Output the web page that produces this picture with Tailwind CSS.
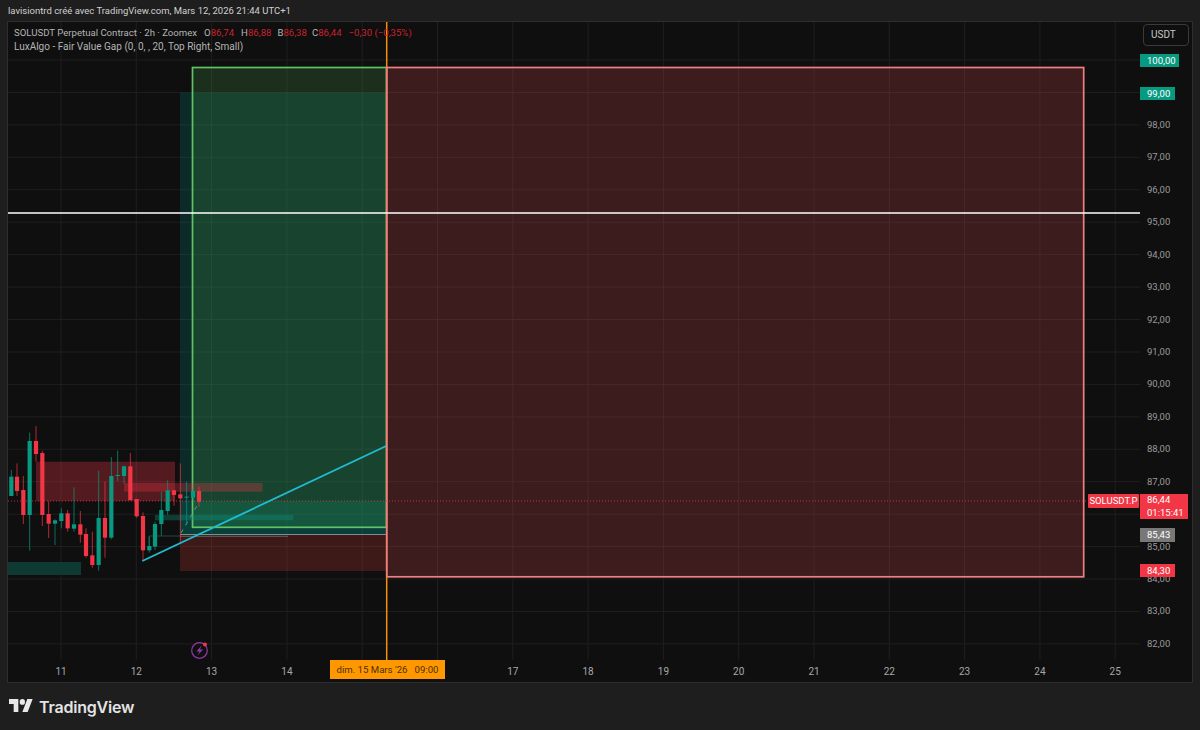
<!DOCTYPE html>
<html lang="fr">
<head>
  <meta charset="UTF-8">
  <script src="https://cdn.jsdelivr.net/npm/@tailwindcss/browser@4"></script>
  <title>SOLUSDT Perpetual Contract</title>
</head>
<body class="bg-[#1e1e1e]">
  <div class="w-[1200px] h-[730px] flex flex-col bg-[#1e1e1e] overflow-hidden font-['Roboto',sans-serif]">

    <!-- Header -->
    <div class="h-[21px] shrink-0 pl-2 pt-[4px] text-[9.5px] leading-[14px] text-[#d0d0d0]">lavisiontrd créé avec TradingView.com, Mars 12, 2026 21:44 UTC+1</div>

    <!-- Chart frame -->
    <div class="ml-[7px] w-[1186px] h-[662px] shrink-0 border border-[#2e2e2e] bg-[#0f0f0f] flex flex-col">
      <div class="flex h-[638px]">

        <!-- Pane -->
        <div class="relative w-[1132px] h-[638px]">
          <svg id="pane" class="absolute inset-0" width="1132" height="638" viewBox="8 22 1132 638" xmlns="http://www.w3.org/2000/svg">
            <g id="grid" stroke="#1f1f1f" stroke-width="1"></g>

            <!-- zones -->
            <rect x="8" y="562" width="73" height="13" fill="#0f3a33"/>
            <rect x="36" y="461.7" width="139" height="39.3" fill="#f23645" fill-opacity=".3"/>
            <rect x="180" y="92.5" width="206.500" height="442" fill="#009688" fill-opacity=".2"/>
            <rect x="180" y="501" width="206.500" height="33.5" fill="#009688" fill-opacity=".2"/>
            <rect x="180" y="535" width="206.500" height="36" fill="#f44336" fill-opacity=".2"/>
            <rect x="192.5" y="67.5" width="194" height="459.8" fill="#4caf50" fill-opacity=".2" stroke="#5fc465" stroke-width="1.7"/>
            <rect x="124" y="483" width="138.5" height="8.7" fill="#f23645" fill-opacity=".3"/>
            <rect x="155" y="515" width="138.3" height="5.3" fill="#089981" fill-opacity=".35"/>

            <!-- orange vertical cursor -->
            <line x1="386.7" y1="22" x2="386.7" y2="660" stroke="#f79000" stroke-width="1.5"/>

            <rect x="386.7" y="67.5" width="697" height="509.3" fill="#f4505a" fill-opacity=".2" stroke="#f07f85" stroke-width="1.7"/>

            <polyline points="149,547 149,536 288,536" fill="none" stroke="#1d4a40" stroke-width="1"/>
            <line x1="180" y1="534.5" x2="386" y2="534.5" stroke="#8a8a8a" stroke-width="1"/>
            <line x1="180" y1="536.5" x2="288" y2="536.5" stroke="#555" stroke-width="1"/>
            <line x1="181" y1="533" x2="201" y2="499" stroke="#7c8a88" stroke-width="1" stroke-dasharray="4 5"/>

            <g id="candles"></g>

            <line x1="8" y1="501" x2="1088" y2="501" stroke="#f23645" stroke-opacity=".75" stroke-width="1" stroke-dasharray="1 2"/>
            <line x1="142.3" y1="561" x2="386.2" y2="446" stroke="#1fbcd2" stroke-width="1.8"/>
            <line x1="8" y1="213" x2="1140" y2="213" stroke="#ffffff" stroke-width="1.5"/>

            <!-- bolt badge -->
            <circle cx="199.5" cy="650.5" r="7.8" fill="none" stroke="#8e3aa8" stroke-width="1.2"/>
            <path d="M201.500 645.5 L196.5 651.5 L199.5 651.5 L197.5 655.5 L203 649.5 L200 649.5 Z" fill="#8e3aa8"/>
            <circle cx="205" cy="644.5" r="2" fill="#f23645"/>
          </svg>

          <!-- Legend -->
          <div class="absolute left-[6px] top-[4px] text-[10px] leading-[13px] text-[#b4b4b4] whitespace-nowrap">
            <div class="flex text-[9.6px]">
              <span>SOLUSDT Perpetual Contract · 2h · Zoomex</span>
              <span class="ml-[7px]">O<span class="text-[#c9232e]">86,74</span></span>
              <span class="ml-[7px]">H<span class="text-[#c9232e]">86,88</span></span>
              <span class="ml-[6px]">B<span class="text-[#c9232e]">86,38</span></span>
              <span class="ml-[5px]">C<span class="text-[#c9232e]">86,44</span></span>
              <span class="ml-[7px] text-[#c9232e]">−0,30 (−0,35%)</span>
            </div>
            <div class="mt-[1px]">LuxAlgo - Fair Value Gap (0, 0, , 20, Top Right, Small)</div>
          </div>

          <div class="absolute left-[1080px] top-[472px] h-[13.5px] w-[51px] bg-[#f23645] rounded-[1px] text-[9.5px] leading-[13.5px] text-center text-white whitespace-nowrap">SOLUSDT.P</div>
        </div>

        <!-- Price axis -->
        <div id="axis" class="relative w-[52px] h-[638px] text-[9.5px] text-[#9a9a9a]">
          <div class="absolute left-[3px] top-[2px] w-[46px] h-[22px] border border-[#3a3a3a] rounded-[4px] pl-[7px] text-[10px] leading-[20px] text-[#c8c8c8]">USDT</div>
          <div class="absolute left-0 top-[32px] w-[39px] h-[13px] bg-[#089981] text-white leading-[13px] pl-[7px]">100,00</div>
          <div class="absolute left-0 top-[64.5px] w-[35px] h-[13px] bg-[#089981] text-white leading-[13px] pl-[7px]">99,00</div>
          <div class="absolute left-0 top-[472px] w-[48px] h-[25px] bg-[#f23645] text-white leading-[12.5px] pl-[7px]">86,44<br>01:15:41</div>
          <div class="absolute left-0 top-[506px] w-[35px] h-[13.5px] bg-[#787878] text-white leading-[13.5px] pl-[7px]">85,43</div>
          <div class="absolute left-0 top-[542px] w-[35px] h-[13px] bg-[#f23645] text-white leading-[13px] pl-[7px]">84,30</div>
        </div>
      </div>

      <!-- Time axis -->
      <div id="time" class="relative h-[22px] text-[10px] text-[#a8a8a8]">
        <div class="absolute left-[322px] top-0 w-[115px] h-[19px] bg-[#ff9800] text-[#4a3000] text-[9.6px] leading-[19px] text-center whitespace-pre">dim. 15 Mars '26   09:00</div>
      </div>
    </div>

    <!-- Footer -->
    <div class="flex-1 flex items-start pl-[9px] pt-[14px] gap-[6px]">
      <svg class="mt-[2px]" width="24" height="13" viewBox="0 4 36 18" preserveAspectRatio="none" xmlns="http://www.w3.org/2000/svg">
        <path d="M14 22H7V11H0V4h14v18zM28 22h-8l7.500-18h8L28 22z" fill="#e8e8e8"/>
        <circle cx="20" cy="8" r="4" fill="#e8e8e8"/>
      </svg>
      <span class="font-['Inter',sans-serif] font-semibold text-[16px] leading-[20px] tracking-[-0.2px] text-[#e4e4e4]">TradingView</span>
    </div>
  </div>

  <script>
    var NS = 'http://www.w3.org/2000/svg';
    function add(parent, tag, attrs) {
      var el = document.createElementNS(NS, tag);
      for (var k in attrs) el.setAttribute(k, attrs[k]);
      parent.appendChild(el);
    }

    // grid
    var grid = document.getElementById('grid');
    var time = document.getElementById('time');
    var axis = document.getElementById('axis');
    for (var d = 0; d < 15; d++) {
      var x = 61 + 75.3 * d;
      add(grid, 'line', {x1: x, x2: x, y1: 22, y2: 660});
      var day = 11 + d;
      if (day === 15 || day === 16) continue;
      var t = document.createElement('div');
      t.className = 'absolute top-[5px] w-[30px] text-center leading-[13px]';
      t.style.left = (x - 8 - 15) + 'px';
      t.textContent = day;
      time.appendChild(t);
    }
    for (var p = 0; p <= 18; p++) {
      var y = 60 + 32.44 * p;
      add(grid, 'line', {x1: 8, x2: 1140, y1: y, y2: y});
      var price = 100 - p;
      // 100, 99 and 86 are covered by their price labels
      if (price >= 99 || price === 86) continue;
      var l = document.createElement('div');
      l.className = 'absolute left-[7px] leading-[10px]';
      l.style.top = (y - 22 - 5) + 'px';
      l.textContent = price + ',00';
      axis.insertBefore(l, axis.firstChild);
    }

    // candles: x, wick top, wick bottom, body top, body bottom (3x crop from y=420)
    var G = '#089981', R = '#f23645';
    var candles = [
      [34,150,228,170,228,G],[51,130,228,170,213,R],[70,168,312,210,285,R],[89,38,392,63,285,G],
      [108,18,125,63,102,R],[127,92,318,99,285,R],[146,243,354,282,311,R],[165,298,375,301,311,G],
      [184,265,325,280,303,G],[203,270,335,280,325,R],[222,202,335,313,326,G],[241,273,368,313,344,R],
      [258,325,413,342,408,R],[277,335,443,406,435,R],[296,152,452,294,435,G],[315,185,413,294,353,R],
      [334,111,358,168,353,G],[353,92,183,165,168,G],[372,137,190,139,168,G],[391,99,242,139,240,R],
      [410,237,293,237,289,R],[429,277,420,288,391,R],[448,350,398,378,391,G],[465,305,390,312,380,G],
      [484,216,347,270,312,G],[503,181,285,211,273,G],[522,210,257,211,225,R],[541,130,372,223,235,R],
      [560,185,315,230,233,G],[579,205,240,213,233,G],[597,200,260,213,245,R]
    ];
    var g = document.getElementById('candles');
    candles.forEach(function (c) {
      var cx = c[0] / 3;
      add(g, 'line', {x1: cx, x2: cx, y1: 420 + c[1] / 3, y2: 420 + c[2] / 3, stroke: c[5], 'stroke-width': 1, 'stroke-opacity': .7});
      add(g, 'rect', {x: cx - 2.1, width: 4.2, y: 420 + c[3] / 3, height: (c[4] - c[3]) / 3, fill: c[5]});
    });
  </script>
</body>
</html>
